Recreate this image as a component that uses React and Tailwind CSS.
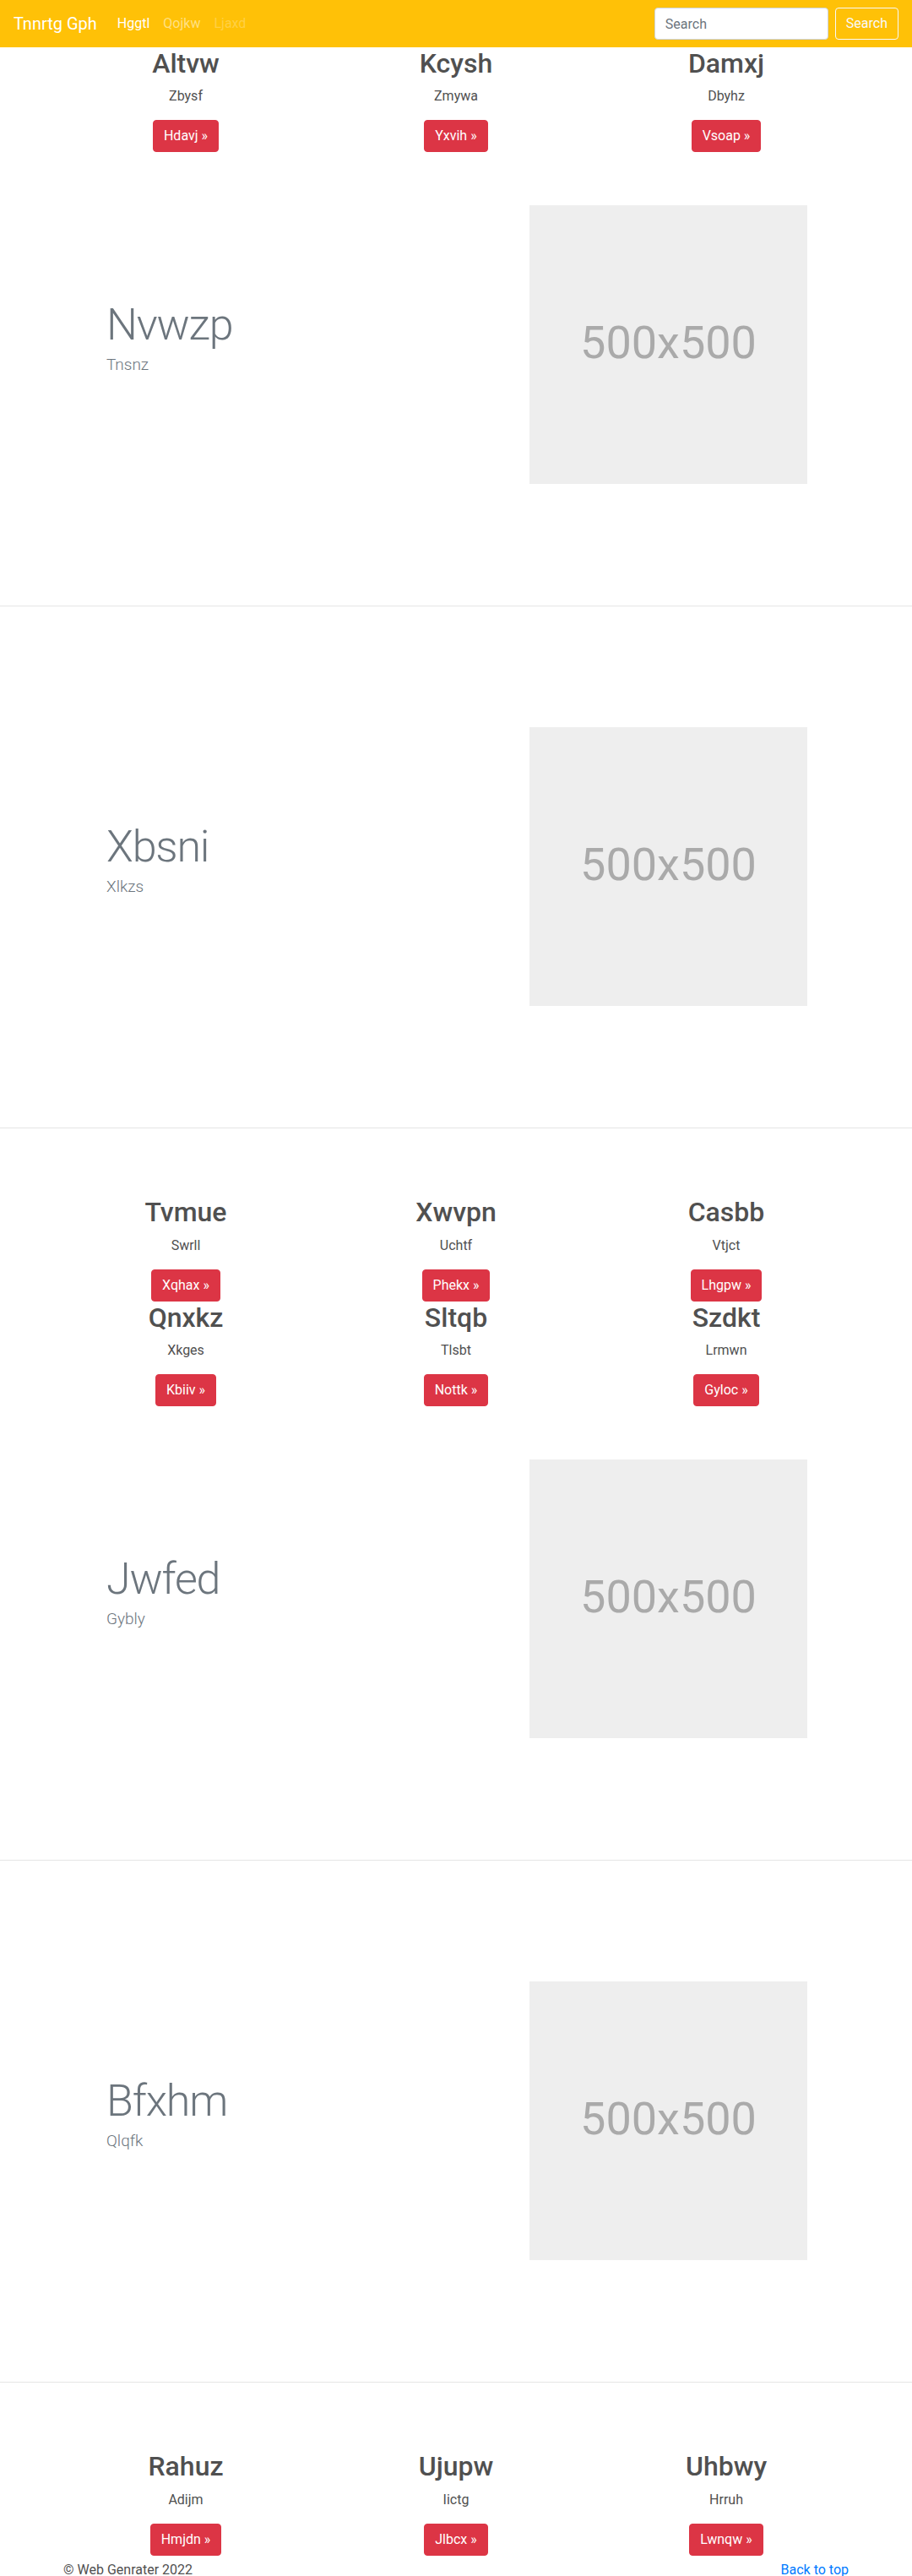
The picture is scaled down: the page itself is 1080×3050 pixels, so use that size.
import React from "react";

const topCols = [
  { h: "Altvw", p: "Zbysf", b: "Hdavj" },
  { h: "Kcysh", p: "Zmywa", b: "Yxvih" },
  { h: "Damxj", p: "Dbyhz", b: "Vsoap" },
];
const midCols1 = [
  { h: "Tvmue", p: "Swrll", b: "Xqhax" },
  { h: "Xwvpn", p: "Uchtf", b: "Phekx" },
  { h: "Casbb", p: "Vtjct", b: "Lhgpw" },
];
const midCols2 = [
  { h: "Qnxkz", p: "Xkges", b: "Kbiiv" },
  { h: "Sltqb", p: "Tlsbt", b: "Nottk" },
  { h: "Szdkt", p: "Lrmwn", b: "Gyloc" },
];
const lastCols = [
  { h: "Rahuz", p: "Adijm", b: "Hmjdn" },
  { h: "Ujupw", p: "Iictg", b: "Jlbcx" },
  { h: "Uhbwy", p: "Hrruh", b: "Lwnqw" },
];

function ColsRow({ items }) {
  return (
    <div className="w-[960px] mx-auto grid grid-cols-3">
      {items.map((it) => (
        <div key={it.h} className="px-[15px] text-center">
          <h2 className="text-[32px] leading-[38.4px] font-medium text-[#505050] mb-2">{it.h}</h2>
          <p className="text-[16px] leading-6 text-[#505050] mb-4">{it.p}</p>
          <a
            href="#"
            className="inline-block h-[38px] px-3 leading-[36px] rounded border border-[#dc3545] bg-[#dc3545] text-white text-[16px]"
          >
            {it.b} &raquo;
          </a>
        </div>
      ))}
    </div>
  );
}

function Featurette({ title, lead }) {
  return (
    <div className="w-[960px] mx-auto pt-[63px] pb-[64px] flex items-center">
      <div className="w-[567px] pl-[66px] pb-[16px]">
        <h2 className="text-[52px] leading-[64px] font-light tracking-[-1.2px] text-[#6c757d]">{title}</h2>
        <p className="text-[19px] leading-[30px] font-light text-[#6c757d]">{lead}</p>
      </div>
      <div className="w-[329px] h-[330px] bg-[#eeeeee] flex items-center justify-center">
        <span className="text-[54px] leading-none text-[#aaaaaa] mb-[4px]">500x500</span>
      </div>
    </div>
  );
}

function Divider() {
  return <hr className="my-[80px] border-0 border-t border-[#e5e5e5]" />;
}

export default function App() {
  return (
    <div className="min-h-[3050px] bg-white font-['Segoe_UI',Roboto,sans-serif] text-[16px] text-[#212529]">
      <nav className="h-[56px] bg-[#ffc107] px-4 flex items-center">
        <a href="#" className="text-[20px] leading-[30px] text-white mr-4">
          Tnnrtg Gph
        </a>
        <ul className="flex items-center">
          <li>
            <a href="#" className="block px-2 py-2 text-white">Hggtl</a>
          </li>
          <li>
            <a href="#" className="block px-2 py-2 text-[#ffe083]">Qojkw</a>
          </li>
          <li>
            <a href="#" className="block px-2 py-2 text-[#ffd045]">Ljaxd</a>
          </li>
        </ul>
        <form className="ml-auto flex items-center">
          <input
            type="text"
            placeholder="Search"
            className="w-[206px] h-[38px] px-3 rounded border border-[#ced4da] bg-white text-[16px] text-[#495057] placeholder:text-[#6c757d] mr-2 outline-none"
          />
          <button
            type="button"
            className="h-[38px] px-3 rounded border border-[#f8f9fa] text-[#f8f9fa] text-[16px] bg-transparent"
          >
            Search
          </button>
        </form>
      </nav>

      <main>
        <ColsRow items={topCols} />
        <Featurette title="Nvwzp" lead="Tnsnz" />
        <Divider />
        <Featurette title="Xbsni" lead="Xlkzs" />
        <Divider />
        <ColsRow items={midCols1} />
        <ColsRow items={midCols2} />
        <Featurette title="Jwfed" lead="Gybly" />
        <Divider />
        <Featurette title="Bfxhm" lead="Qlqfk" />
        <Divider />
        <ColsRow items={lastCols} />
      </main>

      <footer className="w-[960px] mx-auto px-[15px] pt-[5px] flex justify-between text-[16px] leading-6">
        <p className="text-[#505050]">&copy; Web Genrater 2022</p>
        <a href="#" className="text-[#007bff]">Back to top</a>
      </footer>
    </div>
  );
}
